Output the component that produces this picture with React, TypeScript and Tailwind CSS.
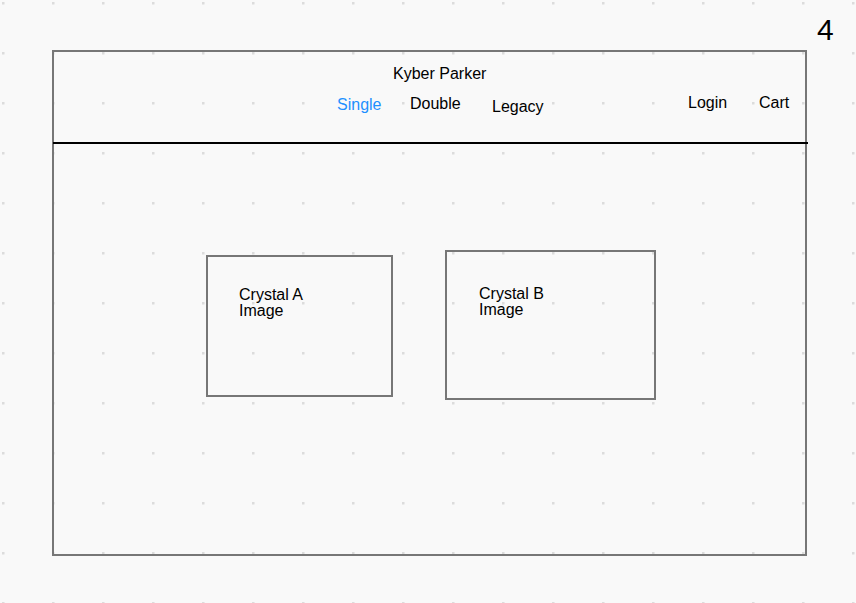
import React from "react";

const font = { fontFamily: '"Liberation Sans", Arial, sans-serif' };

function Card({ label, className, textPad }: { label: string; className: string; textPad: string }) {
  return (
    <div className={`border-2 border-[#777777] ${className}`}>
      <div className={`text-[16px] leading-none ${textPad}`}>
        {label}
        <br />
        Image
      </div>
    </div>
  );
}

export default function App() {
  return (
    <div
      className="relative w-[856px] h-[603px] overflow-hidden bg-[#f9f9f9] text-black pt-[50px] pl-[52px]"
      style={font}
    >
      <svg className="absolute inset-0" width="856" height="603">
        <defs>
          <pattern id="dots" width="50" height="50" patternUnits="userSpaceOnUse">
            <rect x="2" y="2" width="2.5" height="2.5" fill="#dcdcdc" />
          </pattern>
        </defs>
        <rect width="856" height="603" fill="url(#dots)" />
      </svg>

      <div className="absolute left-[817px] top-[15px] text-[30px] leading-none">4</div>

      <div className="relative w-[755px] h-[506px] border-2 border-[#777777] flex flex-col">
        <header className="h-[90px] flex flex-col">
          <div className="pt-[14px] pl-[339px] text-[16px] leading-none">Kyber Parker</div>
          <nav className="mt-[13px] pl-[283px] flex items-start text-[16px] leading-none">
            <div className="w-[73px] mt-[2px] text-[#1e90ff]">Single</div>
            <div className="w-[82px] mt-[1px]">Double</div>
            <div className="w-[196px] mt-[4px]">Legacy</div>
            <div className="w-[71px]">Login</div>
            <div>Cart</div>
          </nav>
        </header>
        <div className="ml-[-1px] w-[755px] h-[2px] bg-black shrink-0" />
        <main className="flex items-start pl-[152px]">
          <Card label="Crystal A" className="mt-[111px] w-[187px] h-[142px]" textPad="pt-[30px] pl-[31px]" />
          <Card label="Crystal B" className="mt-[106px] ml-[52px] w-[211px] h-[150px]" textPad="pt-[34px] pl-[32px]" />
        </main>
      </div>
    </div>
  );
}
